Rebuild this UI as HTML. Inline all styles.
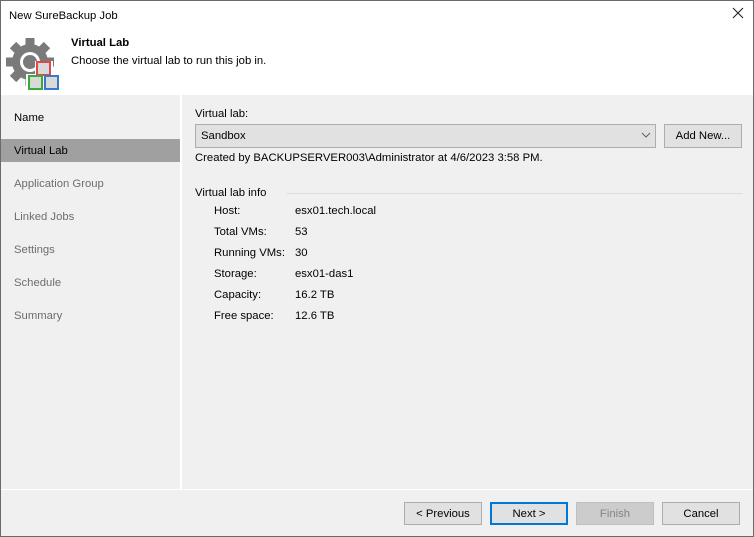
<!DOCTYPE html>
<html><head><meta charset="utf-8"><style>
*{margin:0;padding:0;box-sizing:border-box}
body{width:754px;height:537px;overflow:hidden;font-family:"Liberation Sans",sans-serif;font-size:11.3px;color:#000;background:#f0f0f0;position:relative}
.win{position:absolute;left:0;top:0;width:754px;height:537px;border:1px solid #6a6a6a;background:#f0f0f0}
.a{position:absolute;white-space:nowrap;line-height:15px}
.hdr{position:absolute;left:0;top:0;width:752px;height:94px;background:#fff}
.vline{position:absolute;left:179px;top:94px;width:2px;height:394px;background:#fff}
.hline{position:absolute;left:0;top:488px;width:752px;height:1px;background:#fff}
.sel{position:absolute;left:0;top:138px;width:179px;height:23px;background:#a0a0a0}
.si{position:absolute;left:13px}
.gray{color:#6d6d6d}
.btn{position:absolute;top:501px;width:78px;height:23px;border:1px solid #adadad;background:#e1e1e1;text-align:center;line-height:22px}
</style></head><body><div class="win">
<div class="hdr">
<div class="a" style="left:8px;top:8px">New SureBackup Job</div>
<svg class="a" style="left:731px;top:6px" width="12" height="12"><path d="M1 1L11 11M11 1L1 11" stroke="#222" stroke-width="1.1"/></svg>
<svg class="a" style="left:0;top:30px" width="64" height="64" viewBox="0 0 64 64">
<defs><rect id="t" x="-4.5" y="-24" width="9" height="9"/></defs>
<g fill="#7a7a7a" transform="translate(29,31)">
<circle r="18"/>
<use href="#t"/><use href="#t" transform="rotate(45)"/><use href="#t" transform="rotate(90)"/><use href="#t" transform="rotate(135)"/>
<use href="#t" transform="rotate(180)"/><use href="#t" transform="rotate(225)"/><use href="#t" transform="rotate(270)"/><use href="#t" transform="rotate(315)"/>
</g>
<circle cx="29" cy="31" r="10" fill="#fff"/>
<circle cx="29" cy="31" r="7" fill="#7a7a7a"/>
<path d="M34 30H52V44H60V60H25V43H34Z" fill="#fff"/>
<rect x="36" y="31" width="13" height="13" fill="#d9d9d9" stroke="#e04848" stroke-width="2"/>
<rect x="28" y="45" width="13" height="13" fill="#d9d9d9" stroke="#3aaa3a" stroke-width="2"/>
<rect x="44" y="45" width="13" height="13" fill="#d9d9d9" stroke="#3a78c8" stroke-width="2"/>
</svg>
<div class="a" style="left:70px;top:35px;font-weight:bold">Virtual Lab</div>
<div class="a" style="left:70px;top:53px">Choose the virtual lab to run this job in.</div>
</div>
<div class="sel"></div>
<div class="si a" style="top:110px">Name</div>
<div class="si a" style="top:143px">Virtual Lab</div>
<div class="si a gray" style="top:176px">Application Group</div>
<div class="si a gray" style="top:209px">Linked Jobs</div>
<div class="si a gray" style="top:242px">Settings</div>
<div class="si a gray" style="top:275px">Schedule</div>
<div class="si a gray" style="top:308px">Summary</div>
<div class="vline"></div>
<div class="hline"></div>
<div class="a" style="left:194px;top:106px">Virtual lab:</div>
<div class="a" style="left:194px;top:123px;width:461px;height:24px;border:1px solid #adadad;background:#e1e1e1"></div>
<div class="a" style="left:200px;top:128px">Sandbox</div>
<svg class="a" style="left:640px;top:131px" width="10" height="6"><path d="M1 1 L5 5 L9 1" fill="none" stroke="#606060"/></svg>
<div class="a" style="left:663px;top:123px;width:78px;height:24px;border:1px solid #adadad;background:#e1e1e1;text-align:center;line-height:23px">Add New...</div>
<div class="a" style="left:194px;top:150px">Created by BACKUPSERVER003\Administrator at 4/6/2023 3:58 PM.</div>
<div class="a" style="left:194px;top:185px">Virtual lab info</div>
<div class="a" style="left:286px;top:192px;width:456px;height:1px;background:#dcdcdc"></div>
<div class="a" style="left:213px;top:203px">Host:</div><div class="a" style="left:294px;top:203px">esx01.tech.local</div>
<div class="a" style="left:213px;top:224px">Total VMs:</div><div class="a" style="left:294px;top:224px">53</div>
<div class="a" style="left:213px;top:245px">Running VMs:</div><div class="a" style="left:294px;top:245px">30</div>
<div class="a" style="left:213px;top:266px">Storage:</div><div class="a" style="left:294px;top:266px">esx01-das1</div>
<div class="a" style="left:213px;top:287px">Capacity:</div><div class="a" style="left:294px;top:287px">16.2 TB</div>
<div class="a" style="left:213px;top:308px">Free space:</div><div class="a" style="left:294px;top:308px">12.6 TB</div>
<div class="btn" style="left:403px">&lt; Previous</div>
<div class="btn" style="left:489px;border:2px solid #0078d7;line-height:20px">Next &gt;</div>
<div class="btn" style="left:575px;background:#cccccc;border-color:#bfbfbf;color:#838383">Finish</div>
<div class="btn" style="left:661px">Cancel</div>
</div></body></html>
